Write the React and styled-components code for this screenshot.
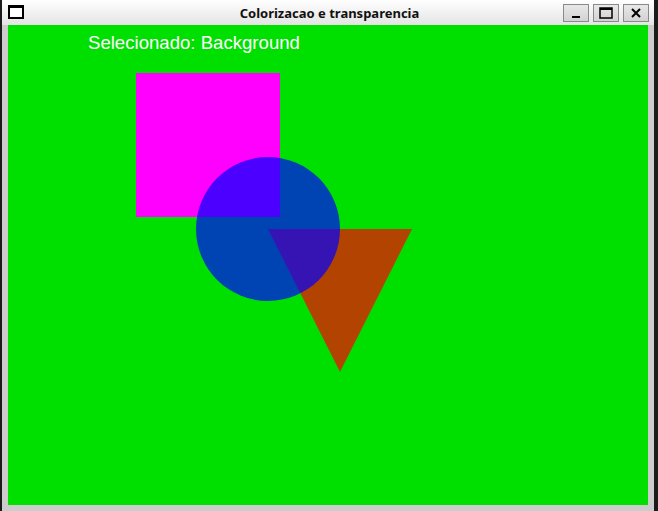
import styled, { createGlobalStyle } from "styled-components";

const GlobalStyle = createGlobalStyle`
  html, body {
    margin: 0;
    padding: 0;
    background: #1b1b1b;
    overflow: hidden;
  }
`;

const Desktop = styled.div`
  width: 658px;
  height: 511px;
  display: flex;
  background: #1b1b1b;
  padding-left: 2px;
  box-sizing: border-box;
`;

const Window = styled.div`
  width: 652px;
  height: 511px;
  display: flex;
  flex-direction: column;
  background: #cccccc;
`;

const TitleBar = styled.div`
  height: 25px;
  flex-shrink: 0;
  display: flex;
  align-items: center;
  padding: 0 5px 0 6px;
  background: linear-gradient(#ffffff, #e4e4e4);
`;

const WinIcon = styled.div`
  width: 12px;
  height: 9px;
  border: 2px solid #000;
  border-top-width: 3px;
  background: #fff;
  margin-top: -1px;
`;

const Title = styled.div`
  flex: 1;
  text-align: center;
  font-family: "Noto Sans", "DejaVu Sans", sans-serif;
  font-weight: bold;
  font-size: 13px;
  color: #111;
  padding-left: 72px;
`;

const Buttons = styled.div`
  display: flex;
  gap: 4px;
`;

const WinButton = styled.div`
  width: 24px;
  height: 16px;
  border: 1px solid #8a8a8a;
  background: linear-gradient(#e8e8e8, #d2d2d2);
  display: flex;
  align-items: center;
  justify-content: center;
`;

const Body = styled.div`
  flex: 1;
  padding: 0 6px 6px 6px;
  display: flex;
`;

const Canvas = styled.svg`
  display: block;
  width: 640px;
  height: 480px;
  background: #00e000;
`;

const Label = styled.text`
  font-family: "Liberation Sans", Arial, sans-serif;
  font-size: 18.6px;
  fill: #ffffff;
`;

export default function App() {
  return (
    <>
      <GlobalStyle />
      <Desktop>
        <Window>
          <TitleBar>
            <WinIcon />
            <Title>Colorizacao e transparencia</Title>
            <Buttons>
              <WinButton>
                <svg width="12" height="12" viewBox="0 0 12 12">
                  <rect x="2" y="9" width="8" height="2" fill="#000" />
                </svg>
              </WinButton>
              <WinButton>
                <svg width="14" height="12" viewBox="0 0 14 12">
                  <rect x="1" y="1" width="12" height="10" fill="none" stroke="#000" strokeWidth="1.5" />
                  <rect x="1" y="1" width="12" height="2" fill="#000" />
                </svg>
              </WinButton>
              <WinButton>
                <svg width="12" height="12" viewBox="0 0 12 12">
                  <path d="M2 2 L10 10 M10 2 L2 10" stroke="#000" strokeWidth="2" />
                </svg>
              </WinButton>
            </Buttons>
          </TitleBar>
          <Body>
            <Canvas viewBox="0 0 640 480">
              <Label x="80" y="24">Selecionado: Background</Label>
              <rect x="128" y="48" width="144" height="144" fill="#ff00ff" />
              <polygon points="260,204 404,204 332,347" fill="rgba(255,0,0,0.7)" />
              <circle cx="260" cy="204" r="72" fill="rgba(0,0,255,0.7)" />
            </Canvas>
          </Body>
        </Window>
      </Desktop>
    </>
  );
}
